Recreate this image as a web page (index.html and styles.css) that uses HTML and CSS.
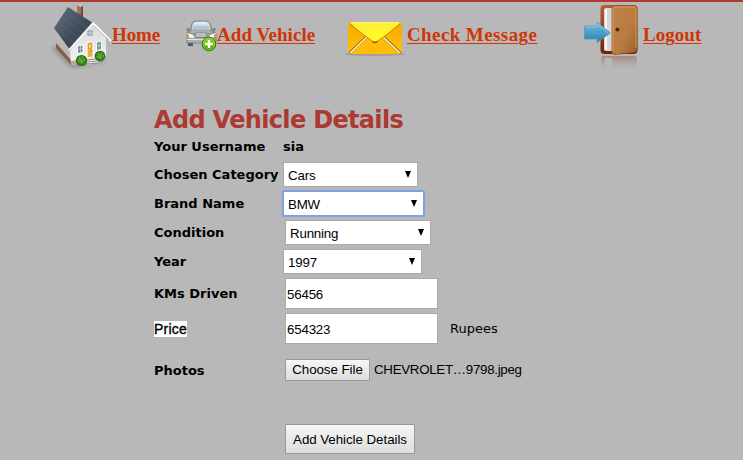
FILE: index.html
```html
<!DOCTYPE html>
<html lang="en">
<head>
<meta charset="utf-8">
<title>Add Vehicle Details</title>
<link rel="stylesheet" href="styles.css">
</head>
<body>
<nav class="nav">
  <a class="item home" href="#">
    <svg width="62" height="70" viewBox="0 0 62 70">
      <defs>
        <linearGradient id="roof" x1="0" y1="0" x2="1" y2="1"><stop offset="0" stop-color="#65717f"/><stop offset=".6" stop-color="#3d4856"/><stop offset="1" stop-color="#4d5a69"/></linearGradient>
        <linearGradient id="wall" x1="0" y1="0" x2="0" y2="1"><stop offset="0" stop-color="#d9d9d9"/><stop offset="1" stop-color="#f4f4f4"/></linearGradient>
        <radialGradient id="bush"><stop offset="0" stop-color="#62b431"/><stop offset="1" stop-color="#1f6811"/></radialGradient>
        <filter id="soft"><feGaussianBlur stdDeviation="2"/></filter>
      </defs>
      <path d="M2 48L22 68L55 61L40 38Z" fill="#555" opacity=".45" filter="url(#soft)"/>
      <path d="M27 5L32 7V18L27 14Z" fill="#a2705b"/><path d="M31 6L33 5V17H31Z" fill="#704c40"/><path d="M27 5L30 4L33 5L31 7Z" fill="#ccc"/>
      <path d="M6 29L21 49V65L7 48Z" fill="#b9b9b9"/>
      <path d="M6 43L21 60V65L6 48Z" fill="#8a5b4b"/>
      <path d="M20 49L43 23L56 38V59L21 65Z" fill="url(#wall)"/>
      <path d="M21 61L56 56V59L21 65Z" fill="#b7a69d"/>
      <path d="M18 7L43 23L20 50L4 28Z" fill="url(#roof)"/>
      <path d="M14 12L38 29M11 17L34 34M8 22L29 39M6 26L25 44" stroke="#6b7785" stroke-width=".5" opacity=".6"/>
      <path d="M19 50L43 23L61 41" fill="none" stroke="#fff" stroke-width="1.8"/>
      <path d="M44 26L59 40" fill="none" stroke="#a8a8a8" stroke-width=".7"/>
      <circle cx="40" cy="33" r="3.7" fill="#8fa2af" stroke="#dce1e5"/><path d="M36.5 33H43.5M40 29.5V36.5" stroke="#eee" stroke-width=".7"/>
      <path d="M27.500 46L33 45V52.500L27.500 53.500Z" fill="#6d8998" stroke="#fff"/><path d="M46.500 42L51.500 41V49.500L46.500 50.500Z" fill="#6d8998" stroke="#fff"/>
      <path d="M28 49.5L33 48.5M30.5 45.5V52.5M47 46L51 45M49 42V49" stroke="#dde5ea" stroke-width=".6"/>
      <path d="M37 42.5L43 41.5V57L37 58Z" fill="#f1ae3f" stroke="#fff"/><path d="M38.5 44.5L41.5 44V48L38.5 48.5Z" fill="#ffdc81" stroke="#b87923" stroke-width=".5"/><circle cx="41.5" cy="51" r=".6" fill="#7b5925"/>
      <path d="M37 58L44 57L48 61V63L38 65Z" fill="#e9e9e9"/><path d="M37 60L46 59M38 62L47 61M38 64L48 63" stroke="#777" stroke-width=".8"/>
      <circle cx="31.500" cy="60.500" r="5.600" fill="url(#bush)"/><circle cx="50" cy="56" r="5.300" fill="url(#bush)"/>
      <path d="M29 58h1M32 57h1M34 60h1M31 62h1M28 61h1M48 54h1M51 53h1M53 56h1M50 58h1M47 57h1" stroke="#98d765"/>
    </svg><span>Home</span>
  </a>
  <a class="item vehicle" href="#">
    <svg width="32" height="33" viewBox="0 0 32 33">
      <defs>
        <linearGradient id="car" x1="0" y1="0" x2="0" y2="1"><stop offset="0" stop-color="#cbd0d3"/><stop offset=".5" stop-color="#8c9296"/><stop offset="1" stop-color="#b4b8bb"/></linearGradient>
        <linearGradient id="glass" x1="0" y1="0" x2="0" y2="1"><stop offset="0" stop-color="#eaf5fb"/><stop offset="1" stop-color="#8db6cf"/></linearGradient>
        <linearGradient id="plus" x1="0" y1="0" x2="0" y2="1"><stop offset="0" stop-color="#8fdb1f"/><stop offset="1" stop-color="#4aa000"/></linearGradient>
      </defs>
      <path d="M3 22H8V26H3Z" fill="#555"/><path d="M22 22H28V26H22Z" fill="#555"/>
      <path d="M2 14Q2 11 5 10L7 3Q8 1 11 1H21Q24 1 25 3L27 10Q30 11 31 14V23H2Z" fill="url(#car)" stroke="#676d70" stroke-width=".7"/>
      <path d="M7 9L9 4Q10 2.500 12 2.500H20Q22 2.500 23 4L25 9Z" fill="url(#glass)" stroke="#f4f7f9" stroke-width=".6"/>
      <path d="M1 8.500H4V10.500H2ZM28 8.500H31L30 10.500H28Z" fill="#6b7074"/>
      <path d="M7 10.500H25L27 13H5Z" fill="#aeb3b6"/>
      <path d="M10 12.500H22L21 18H11Z" fill="#777d80"/><path d="M11 14H21M11 16H21" stroke="#fff" stroke-width="1.2"/>
      <path d="M2 13L8 15L9 18L2 17Z" fill="#fff"/><path d="M2 14L4 14.500V17.500L2 17Z" fill="#f78a21"/>
      <path d="M31 13L25 15L24 18L30 17Z" fill="#fff"/><path d="M31 14L29 14.500V17.500L31 17Z" fill="#f78a21"/>
      <path d="M2 19.500H30" stroke="#e1e3e4"/>
      <circle cx="24" cy="24" r="6.800" fill="url(#plus)" stroke="#286c00"/><circle cx="24" cy="24" r="5.900" fill="none" stroke="#a7e954" stroke-width=".6"/>
      <path d="M24 20V28M20 24H28" stroke="#fff" stroke-width="2.400"/>
    </svg><span>Add Vehicle</span>
  </a>
  <a class="item message" href="#">
    <svg width="62" height="36" viewBox="0 0 62 36">
      <defs>
        <linearGradient id="mail" x1="0" y1="0" x2="0" y2="1"><stop offset="0" stop-color="#f5a900"/><stop offset="1" stop-color="#ffc10b"/></linearGradient>
        <linearGradient id="flap" x1="0" y1="0" x2="0" y2="1"><stop offset="0" stop-color="#ffec36"/><stop offset="1" stop-color="#ffff25"/></linearGradient>
      </defs>
      <ellipse cx="30" cy="33" rx="30" ry="2" fill="#888" opacity=".55"/>
      <g transform="translate(-1 0)">
      <rect x="4" y="1" width="54" height="32" rx="4" fill="url(#mail)"/>
      <path d="M6 33L24 16L31 22L39 16L56 33Z" fill="#ffbd09"/>
      <path d="M5.500 32L23 15.500M56.500 32L39 15.500" stroke="#9b6700" stroke-width="2.500"/>
      <path d="M6 32L23.500 15.500M56 32L38.500 15.500" stroke="#fff8de" stroke-width="1.500"/>
      <path d="M6 2Q18 13 29 20.500Q31 22 33 20.500Q44 13 56 2Q55 1 53 1H9Q7 1 6 2Z" fill="url(#flap)"/>
      <path d="M6 3Q18 13 29 20.500Q31 22 33 20.500Q44 13 56 3" fill="none" stroke="#d67c00" stroke-width=".9"/>
      <path d="M7 1.700H55" stroke="#ffef87"/><path d="M28.500 20.500Q31 22.500 33.500 20.500" fill="none" stroke="#994400" stroke-width="1.300"/>
      </g>
    </svg><span>Check Message</span>
  </a>
  <a class="item logout" href="#">
    <svg width="55" height="66" viewBox="0 0 55 66">
      <defs>
        <linearGradient id="door" x1="0" y1="0" x2="1" y2="1"><stop offset="0" stop-color="#be854b"/><stop offset=".6" stop-color="#b87b40"/><stop offset="1" stop-color="#98602f"/></linearGradient>
        <linearGradient id="frame" x1="0" y1="0" x2="0" y2="1"><stop offset="0" stop-color="#b46128"/><stop offset="1" stop-color="#6f210c"/></linearGradient>
        <linearGradient id="arrow" x1="0" y1="0" x2="0" y2="1"><stop offset="0" stop-color="#72bfe2"/><stop offset="1" stop-color="#2d7eac"/></linearGradient>
        <linearGradient id="reflection" x1="0" y1="0" x2="0" y2="1"><stop offset="0" stop-color="#955f43" stop-opacity=".55"/><stop offset="1" stop-color="#aaa" stop-opacity="0"/></linearGradient>
      </defs>
      <path d="M17 66V55Q17 52 20 52H50Q53 52 53 55V66H28V54H21V66Z" fill="url(#reflection)"/>
      <rect x="16.500" y="1" width="37" height="49" rx="4" fill="url(#frame)"/>
      <rect x="20" y="4" width="13" height="43" rx="2" fill="#d5d5d5"/><path d="M22 5V46" stroke="#f4f4f4" stroke-width="2"/>
      <path d="M28 4Q28 1.500 31 1.500H50Q53 1.500 53 4V45Q53 48 50 48.500L31 50.500Q28 50.500 28 48Z" fill="url(#door)" stroke="#7e4526" stroke-width=".7"/>
      <path d="M29 48V5Q29 3 31 3H50Q52 3 52 5V44" fill="none" stroke="#da9d60" stroke-width=".9"/>
      <circle cx="33.500" cy="25.500" r="2" fill="#65220b"/>
      <path d="M.5 22H13V18L26.500 29L13 38.500V35H.5Z" fill="url(#arrow)" stroke="#4798c1" stroke-width=".7"/><path d="M1 23H13.500V20L24.500 29" fill="none" stroke="#96d1eb" stroke-width=".7"/>
    </svg><span>Logout</span>
  </a>
</nav>
<main>
  <h1>Add Vehicle Details</h1>
  <form>
    <label>Your Username</label><b class="username">sia</b>
    <label>Chosen Category</label><div class="select category"><select><option>Cars</option></select></div>
    <label>Brand Name</label><div class="select brand"><select><option>BMW</option></select></div>
    <label>Condition</label><div class="select condition"><select><option>Running</option></select></div>
    <label>Year</label><div class="select year"><select><option>1997</option></select></div>
    <label>KMs Driven</label><div class="field"><input type="text" value="56456"></div>
    <label><mark>Price</mark></label><div class="field"><input type="text" value="654323"><span class="unit">Rupees</span></div>
    <label class="photos">Photos</label><div class="field"><button class="choose" type="button">Choose File</button><span class="file">CHEVROLET…9798.jpeg</span></div>
    <div></div><div class="field"><button class="submit" type="button">Add Vehicle Details</button></div>
  </form>
</main>
</body>
</html>
```
FILE: styles.css
```css
* { box-sizing: border-box; }
body {
  margin: 0;
  height: 460px;
  overflow: hidden;
  background: #b8b8b8;
  border-top: 2px solid #ad3a32;
  color: #000;
  font: 13px "DejaVu Sans", sans-serif;
}
.nav {
  display: flex;
  align-items: flex-start;
  height: 98px;
  padding-left: 50px;
}
.item {
  display: flex;
  align-items: flex-start;
  color: #d13405;
  font: bold 19px/22px "Liberation Serif", serif;
  text-decoration: none;
  white-space: nowrap;
}
.item svg { flex: none; }
.item span {
  margin-top: 22px;
  text-decoration: underline;
  text-decoration-thickness: 1px;
  text-underline-offset: 2px;
}
.home { width: 135px; }
.home svg { margin-top: -2px; }
.vehicle { width: 160px; }
.vehicle svg { margin-top: 18px; }
.message { width: 239px; }
.message svg { margin-top: 19px; }
.logout svg { margin-top: 2px; }
.logout span { margin-left: 4px; }
.home span { letter-spacing: -0.1px; }
.vehicle span { letter-spacing: 0.05px; }
.message span { letter-spacing: 0.4px; }
.logout span { letter-spacing: 0.05px; }
main { padding-left: 154px; }
h1 {
  margin: 0;
  height: 33px;
  color: #ad3a32;
  font: bold 24px/40px "DejaVu Sans", sans-serif;
  letter-spacing: -0.67px;
}
form {
  display: grid;
  grid-template-columns: 129px 1fr;
  grid-template-rows: 27px 29px 29px 29px 29px 35px 35px 47px 92px;
  align-items: center;
}
label { font-weight: bold; white-space: nowrap; }
.photos { padding-top: 2px; }
mark {
  padding: 0;
  background: #fff;
  color: #000;
  font: 14px/16px "Liberation Sans", sans-serif;
  letter-spacing: 0.2px;
  -webkit-text-stroke: 0.35px #000;
}
.select { position: relative; height: 25px; }
select, input, button {
  margin: 0;
  color: #000;
  font: 13.33px "Liberation Sans", sans-serif;
  letter-spacing: -0.2px;
}
select {
  width: 100%;
  height: 100%;
  padding: 1px 0 0 4px;
  appearance: none;
  background: #fff;
  border: 1px solid #a9a9a9;
  border-radius: 0;
}
.select::after {
  content: "";
  position: absolute;
  top: 9px;
  right: 7px;
  border: solid transparent;
  border-width: 7px 3px 0;
  border-top-color: #000;
}
.category { width: 135px; }
.brand { width: 143px; height: 27px; margin-left: -1px; }
.brand::after { top: 10px; right: 8px; }
.brand select { padding-left: 4px; border: 2px solid #7da2df; border-radius: 2px; }
.condition { width: 146px; margin-left: 2px; }
.year { width: 139px; }
.field { display: flex; align-items: center; margin-left: 2px; }
input {
  width: 153px;
  height: 31px;
  padding: 1px 1px 0;
  background: #fff;
  border: 1px solid #a9a9a9;
}
.unit { margin-left: 12px; }
button {
  padding: 0;
  background: linear-gradient(#f6f6f6, #ddd);
  border: 1px solid #999;
  border-radius: 1px;
}
button { letter-spacing: -0.05px; }
.choose { width: 85px; height: 22px; }
.file {
  margin-left: 4px;
  font: 13.33px "Liberation Sans", sans-serif;
  letter-spacing: -0.3px;
}
.submit { width: 130px; height: 30px; }
```
